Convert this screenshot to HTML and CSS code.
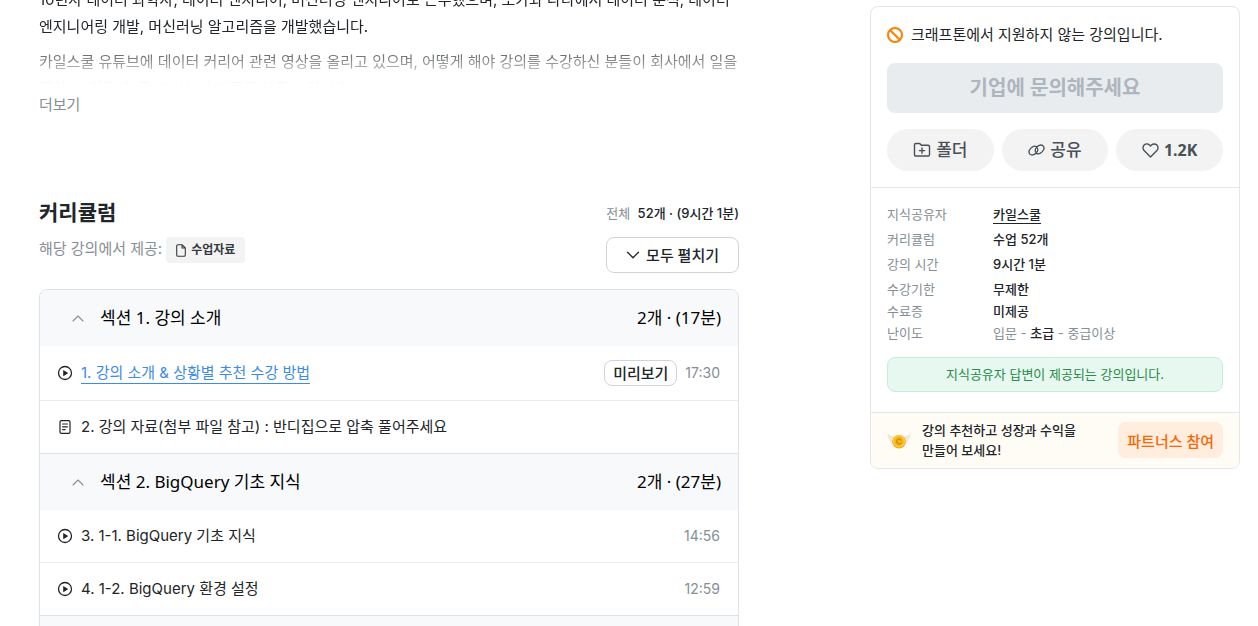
FILE: index.html
```html
<!DOCTYPE html>
<html lang="ko">
<head>
  <meta charset="UTF-8" />
  <title>BigQuery 강의</title>
  <meta name="viewport" content="width=device-width, initial-scale=1" />
  <link rel="stylesheet" href="styles.css">
</head>
<body>
  <div class="container">
    <main>
      <div class="bio">
        <p>10년차 데이터 과학자, 데이터 엔지니어, 머신러닝 엔지니어로 근무했으며, 쏘카와 타다에서 데이터 분석, 데이터 엔지니어링 개발, 머신러닝 알고리즘을 개발했습니다.</p>
        <p>카일스쿨 유튜브에 데이터 커리어 관련 영상을 올리고 있으며, 어떻게 해야 강의를 수강하신 분들이 회사에서 일을 잘할 수 있을까?를 고민하며 자료를 만들고 있어요.</p>
      </div>
      <button class="more">더보기</button>

      <div class="curriculum-head">
        <div>
          <h2>커리큘럼</h2>
          <div class="provide">해당 강의에서 제공:
            <span class="chip">
              <svg width="10" height="13" viewBox="0 0 10 13" fill="none" stroke="#343a40" stroke-width="1.1" stroke-linejoin="round"><path d="M6 .7H2A1.3 1.3 0 0 0 .7 2v9A1.3 1.3 0 0 0 2 12.3h6A1.3 1.3 0 0 0 9.3 11V4zM6 .7V4h3.3"/></svg>
              수업자료
            </span>
          </div>
        </div>
        <div class="summary">
          <div class="total"><span>전체</span> 52개 · (9시간 1분)</div>
          <button class="expand">
            <svg width="14" height="8" viewBox="0 0 14 8" fill="none" stroke="#212529" stroke-width="1.3" stroke-linecap="round" stroke-linejoin="round"><path d="M1.5 1.2 7 6.8l5.5-5.6"/></svg>
            모두 펼치기
          </button>
        </div>
      </div>

      <div class="curriculum">
        <button class="section">
          <svg width="12" height="7" viewBox="0 0 12 7" fill="none" stroke="#868e96" stroke-width="1.1" stroke-linecap="round" stroke-linejoin="round"><path d="M1 6l5-5 5 5"/></svg>
          <span class="section-title">섹션 1. 강의 소개</span>
          <span>2개 · (17분)</span>
        </button>
        <div class="lesson">
          <svg width="16" height="16" viewBox="0 0 16 16"><circle cx="8" cy="8" r="6.5" fill="none" stroke="#212529" stroke-width="1.3"/><path d="M6.2 5.4v5.2q0 .5.5.3l4-2.5q.4-.3 0-.6l-4-2.6q-.5-.3-.5.2z" fill="#212529"/></svg>
          <span class="lesson-title"><a href="#">1. 강의 소개 &amp; 상황별 추천 수강 방법</a></span>
          <button class="preview">미리보기</button>
          <span class="time">17:30</span>
        </div>
        <div class="lesson">
          <svg width="16" height="16" viewBox="0 0 16 16" fill="none" stroke="#212529" stroke-width="1.2" stroke-linecap="round"><rect x="3" y="1.6" width="10" height="12.8" rx="1.4"/><path d="M5.6 5h4.8M5.6 7.8h4.8M5.6 10.6h2.6"/></svg>
          <span class="lesson-title">2. 강의 자료(첨부 파일 참고) : 반디집으로 압축 풀어주세요</span>
        </div>

        <button class="section">
          <svg width="12" height="7" viewBox="0 0 12 7" fill="none" stroke="#868e96" stroke-width="1.1" stroke-linecap="round" stroke-linejoin="round"><path d="M1 6l5-5 5 5"/></svg>
          <span class="section-title">섹션 2. BigQuery 기초 지식</span>
          <span>2개 · (27분)</span>
        </button>
        <div class="lesson">
          <svg width="16" height="16" viewBox="0 0 16 16"><circle cx="8" cy="8" r="6.5" fill="none" stroke="#212529" stroke-width="1.3"/><path d="M6.2 5.4v5.2q0 .5.5.3l4-2.5q.4-.3 0-.6l-4-2.6q-.5-.3-.5.2z" fill="#212529"/></svg>
          <span class="lesson-title">3. 1-1. BigQuery 기초 지식</span>
          <span class="time">14:56</span>
        </div>
        <div class="lesson">
          <svg width="16" height="16" viewBox="0 0 16 16"><circle cx="8" cy="8" r="6.5" fill="none" stroke="#212529" stroke-width="1.3"/><path d="M6.2 5.4v5.2q0 .5.5.3l4-2.5q.4-.3 0-.6l-4-2.6q-.5-.3-.5.2z" fill="#212529"/></svg>
          <span class="lesson-title">4. 1-2. BigQuery 환경 설정</span>
          <span class="time">12:59</span>
        </div>
        <button class="section"></button>
      </div>
    </main>

    <aside class="card">
      <div class="enroll">
        <p class="notice">
          <svg width="16" height="16" viewBox="0 0 16 16" fill="none" stroke="#ff7f00" stroke-width="2"><circle cx="8" cy="8" r="7"/><path d="M3.2 3.2l9.6 9.6"/></svg>
          크래프톤에서 지원하지 않는 강의입니다.
        </p>
        <button class="ask" disabled>기업에 문의해주세요</button>
        <div class="actions">
          <button>
            <svg width="18" height="16" viewBox="0 0 18 16" fill="none" stroke="#495057" stroke-width="1.4" stroke-linecap="round" stroke-linejoin="round"><path d="M1.5 2.8c0-.8.5-1.3 1.3-1.3h3.4c.5 0 .8.2 1.1.5l1 1.2h6.9c.8 0 1.3.5 1.3 1.3v8.2c0 .8-.5 1.3-1.3 1.3H2.8c-.8 0-1.3-.5-1.3-1.3zM9 6v5.2M6.4 8.6h5.2"/></svg>
            폴더
          </button>
          <button>
            <svg width="17" height="14" viewBox="0 0 17 14" fill="none" stroke="#495057" stroke-width="1.3" stroke-linecap="round"><path d="M8.6 3.6C6.8 2.6 4.6 3.4 2.9 5.1 1 7 .5 9.5 1.9 11.1c1.5 1.5 4.2 1 6-.8 1.8-1.7 2.3-3.9 1.3-5.4"/><path d="M8.4 10.4c1.8 1 4 .2 5.7-1.5 1.9-1.9 2.4-4.4 1-6-1.5-1.5-4.2-1-6 .8-1.8 1.7-2.3 3.9-1.3 5.4"/></svg>
            공유
          </button>
          <button class="like">
            <svg width="17" height="15" viewBox="0 0 17 15" fill="none" stroke="#495057" stroke-width="1.4" stroke-linejoin="round"><path d="M8.5 13.9 2.1 7.5A3.8 3.8 0 0 1 7.5 2.1l1 1 1-1a3.8 3.8 0 0 1 5.4 5.4z"/></svg>
            1.2K
          </button>
        </div>
      </div>

      <div class="info">
        <dl>
          <dt>지식공유자</dt><dd><a href="#">카일스쿨</a></dd>
          <dt>커리큘럼</dt><dd>수업 52개</dd>
          <dt>강의 시간</dt><dd>9시간 1분</dd>
        </dl>
        <dl class="tight">
          <dt>수강기한</dt><dd>무제한</dd>
          <dt>수료증</dt><dd>미제공</dd>
          <dt>난이도</dt><dd class="level">입문 - <b>초급</b> - 중급이상</dd>
        </dl>
        <p class="answer">지식공유자 답변이 제공되는 강의입니다.</p>
      </div>

      <div class="partners">
        <svg width="24" height="18" viewBox="0 0 24 18">
          <path d="M8 13C4 13 2 10 2.5 8.5 1 7.5 0 4 .5 2.5 3 5 6 5 9 6zM16 13c4 0 6-3 5.5-4.5C23 7.5 24 4 23.5 2.5 21 5 18 5 15 6z" fill="#f4ecd9"/>
          <path d="M1 4.5Q4 7 8 7M2.8 8.5Q5 10 8 9.5M23 4.5Q20 7 16 7M21.2 8.5Q19 10 16 9.5" fill="none" stroke="#e2d9c4" stroke-width=".7"/>
          <circle cx="12" cy="10.8" r="6.8" fill="#e9a512"/>
          <circle cx="12" cy="10.3" r="6.2" fill="#ffcb36"/>
          <circle cx="12" cy="10.4" r="4.8" fill="#f5b41d"/>
          <path d="M14 9a2.4 2.4 0 1 0 0 3" fill="none" stroke="#cf8908" stroke-width="1.2" stroke-linecap="round"/>
        </svg>
        <p>강의 추천하고 성장과 수익을<br>만들어 보세요!</p>
        <button>파트너스 참여</button>
      </div>
    </aside>
  </div>
</body>
</html>
```
FILE: styles.css
```css
* { box-sizing: border-box; }
body { margin: 0; background: white; color: #212529; font-family: Inter, "Noto Sans CJK KR", sans-serif; font-size: 15px; overflow: hidden; }
p, h2, dl, dd { margin: 0; }
button { padding: 0; border: 0; background: none; color: inherit; font-family: "Noto Sans", "Noto Sans CJK KR", sans-serif; font-size: 15px; cursor: pointer; }
svg { flex: none; }
.container { display: grid; grid-template-columns: minmax(0, 1fr) 370px; gap: 131px; align-items: start; padding: 0 18px 0 39px; }

.bio { max-height: 108px; margin-top: -14px; overflow: hidden; line-height: 27px; word-break: keep-all; -webkit-mask-image: linear-gradient(#000 54px, transparent 98px); mask-image: linear-gradient(#000 54px, transparent 98px); }
.bio p + p { margin-top: 8px; }
.more { display: block; color: #868e96; font-family: inherit; line-height: 22px; }

.curriculum-head { display: flex; justify-content: space-between; margin-top: 83px; }
h2 { margin-bottom: 10px; font-size: 21px; font-weight: 700; line-height: 28px; }
.provide { display: flex; align-items: flex-start; gap: 4px; color: #868e96; line-height: 24px; }
.chip { display: inline-flex; align-items: center; gap: 5px; height: 26px; padding: 0 10px; border-radius: 4px; background: #f3f3f3; color: #343a40; font-size: 12px; font-weight: 600; }
.summary { display: flex; flex-direction: column; align-items: flex-end; gap: 10px; }
.total { font-size: 13px; font-weight: 500; line-height: 28px; }
.total span { margin-right: 4px; color: #868e96; font-weight: 400; }
.expand { display: flex; align-items: center; gap: 6px; height: 36px; padding: 0 19px; border: 1px solid #ced4da; border-radius: 8px; font-weight: 500; line-height: 20px; }

.curriculum { margin-top: 16px; border: 1px solid #dee2e6; border-radius: 8px; overflow: hidden; }
.section { display: flex; align-items: center; width: 100%; height: 56px; padding: 0 17px 0 32px; background: #f8f9fb; color: #000; font-size: 17px; line-height: 24px; }
.section-title { flex: 1; margin-left: 16px; text-align: left; }
.lesson { display: flex; align-items: center; gap: 8px; padding: 13px 18px 13px 17px; border-bottom: 1px solid #e9ecef; line-height: 26px; }
.lesson:has(+ .section) { border-bottom-color: #dee2e6; }
.lesson-title { flex: 1; }
.lesson a { display: inline-block; border-bottom: 1px solid #3b8beb; color: #3b8beb; line-height: 20px; text-decoration: none; }
.preview { height: 26px; margin: 1px 0; padding: 0 8px; border: 1px solid #ced4da; border-radius: 8px; font-size: 15px; font-weight: 500; line-height: 24px; }
.time { color: #868e96; font-size: 14px; }

.card { margin-top: 6px; border: 1px solid #e4e6e8; border-radius: 8px; overflow: hidden; }
.enroll { padding: 16px; border-bottom: 1px solid #e4e6e8; }
.notice { display: flex; align-items: center; gap: 8px; margin-bottom: 16px; line-height: 24px; }
.ask { display: block; width: 100%; height: 50px; border-radius: 8px; background: #e9ecef; color: #adb5bd; font-size: 20px; font-weight: 700; line-height: 50px; }
.actions { display: grid; grid-template-columns: repeat(3, 1fr); gap: 8px; margin-top: 16px; }
.actions button { display: flex; align-items: center; justify-content: center; gap: 5px; height: 42px; border-radius: 21px; background: #f3f3f3; color: #495057; font-size: 17px; font-weight: 500; line-height: 24px; }
.actions .like { font-size: 16px; font-weight: 700; }

.info { padding: 15px 16px 20px; }
.info dl { display: grid; grid-template-columns: 106px 1fr; row-gap: 3px; margin-bottom: 3px; font-size: 13px; line-height: 22px; }
.info .tight { row-gap: 0; margin-bottom: 13px; }
dt { color: #868e96; }
dd { font-weight: 500; }
dd a { display: inline-block; border-bottom: 1px solid #212529; color: inherit; line-height: 18px; text-decoration: none; }
.level { color: #868e96; font-weight: 400; }
.level b { color: #212529; font-weight: 500; }
.answer { padding: 6px; border: 1px solid #c3eedb; border-radius: 8px; background: #e6f8f0; color: #2b8a4b; font-size: 13px; line-height: 21px; text-align: center; }

.partners { display: flex; align-items: center; padding: 7px 16px 8px; border-top: 1px solid #e4e6e8; background: #fffbf5; }
.partners p { flex: 1; margin-left: 11px; font-size: 13px; font-weight: 500; line-height: 20px; }
.partners button { height: 36px; padding: 0 9px; border-radius: 8px; background: #ffeddd; color: #f76707; font-size: 15px; font-weight: 500; }
```
